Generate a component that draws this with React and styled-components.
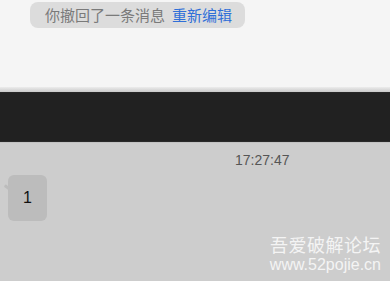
import React from "react";
import styled, { createGlobalStyle } from "styled-components";

const Global = createGlobalStyle`
  html, body { margin: 0; padding: 0; }
  body { width: 390px; height: 281px; overflow: hidden; font-family: "Noto Sans CJK SC", "Noto Sans", sans-serif; }
`;

const Page = styled.div`
  width: 390px;
  height: 281px;
  display: flex;
  flex-direction: column;
`;

const TopArea = styled.div`
  height: 87px;
  background: #f5f5f5;
  padding: 2px 0 0 30px;
  box-sizing: border-box;
`;

const RecallPill = styled.div`
  display: inline-flex;
  align-items: center;
  height: 26px;
  padding: 0 13px 0 15px;
  border-radius: 8px;
  background: #dcdcdc;
  font-size: 15px;
  line-height: 26px;
  gap: 7px;
`;

const Muted = styled.span`
  color: #7a7a7a;
`;

const Link = styled.span`
  color: #2f6fd8;
`;

const Divider = styled.div`
  height: 5px;
  background: linear-gradient(#ececec, #dedede 40%, #c9c9c9);
`;

const DarkBand = styled.div`
  height: 48px;
  background: #212121;
  border-top: 1px solid #262626;
  border-bottom: 1px solid #2a2a2a;
`;

const ChatArea = styled.div`
  flex: 1;
  background: #cdcdcd;
  border-top: 1px solid #c2c2c2;
  display: flex;
  flex-direction: column;
  position: relative;
`;

const Time = styled.div`
  align-self: flex-start;
  margin: 8px 0 0 235px;
  font-family: "Liberation Sans", Arial, sans-serif;
  font-size: 14px;
  color: #555;
  line-height: 18px;
`;

const Row = styled.div`
  display: flex;
  padding: 6px 0 0 8px;
`;

const Bubble = styled.div`
  position: relative;
  width: 39px;
  height: 46px;
  border-radius: 6px;
  background: #bcbcbc;
  display: flex;
  align-items: center;
  justify-content: center;
  font-family: "Liberation Sans", Arial, sans-serif;
  font-size: 16px;
  color: #111;
  &::before {
    content: "";
    position: absolute;
    left: -4px;
    top: 11px;
    width: 7px;
    height: 3px;
    background: #bcbcbc;
    transform: rotate(35deg);
    border-radius: 1px;
  }
`;

const Watermark = styled.div`
  position: absolute;
  right: 9px;
  bottom: 7px;
  display: flex;
  flex-direction: column;
  align-items: flex-end;
  color: #f4f4f4;
`;

const WmTitle = styled.div`
  font-family: "Noto Sans CJK SC", sans-serif;
  font-size: 18px;
  line-height: 22px;
  letter-spacing: 0.5px;
`;

const WmUrl = styled.div`
  font-family: "Liberation Sans", Arial, sans-serif;
  font-size: 16px;
  line-height: 19px;
`;

export default function App() {
  return (
    <>
      <Global />
      <Page>
        <TopArea>
          <RecallPill>
            <Muted>你撤回了一条消息</Muted>
            <Link>重新编辑</Link>
          </RecallPill>
        </TopArea>
        <Divider />
        <DarkBand />
        <ChatArea>
          <Time>17:27:47</Time>
          <Row>
            <Bubble>1</Bubble>
          </Row>
          <Watermark>
            <WmTitle>吾爱破解论坛</WmTitle>
            <WmUrl>www.52pojie.cn</WmUrl>
          </Watermark>
        </ChatArea>
      </Page>
    </>
  );
}
